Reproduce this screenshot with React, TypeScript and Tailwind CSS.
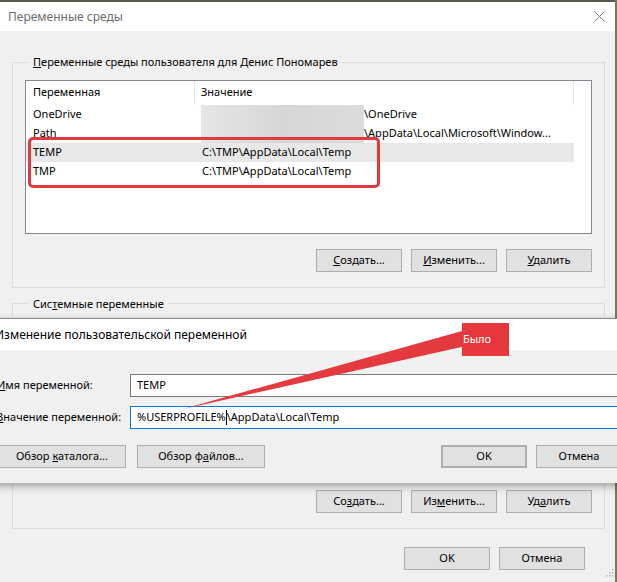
import type { ReactNode } from 'react';

const font = { fontFamily: '"Noto Sans", "Liberation Sans", sans-serif' };

const WinButton = ({ children, className = '' }: { children: ReactNode; className?: string }) => (
  <div
    className={`h-[23px] w-[86px] flex items-center justify-center bg-[#e1e1e1] border border-[#adadad] text-[11px] text-black ${className}`}
  >
    <span className="whitespace-pre">{children}</span>
  </div>
);

const userVars = [
  { name: 'OneDrive', value: '\\OneDrive', hidden: true },
  { name: 'Path', value: '\\AppData\\Local\\Microsoft\\Window...', hidden: true },
  { name: 'TEMP', value: 'C:\\TMP\\AppData\\Local\\Temp', selected: true },
  { name: 'TMP', value: 'C:\\TMP\\AppData\\Local\\Temp' },
];

const VarList = ({ rows }: { rows: typeof userVars }) => (
  <div className="h-[154px] bg-white border border-[#828790] overflow-hidden">
    {/* header */}
    <div className="flex h-[24px] w-[548px] text-[11px] text-black">
      <div className="w-[169px] pl-[7px] flex items-center border-r border-[#e5e5e5]">Переменная</div>
      <div className="flex-1 pl-[6px] flex items-center border-r border-[#e5e5e5]">Значение</div>
    </div>
    {rows.map((r) => (
      <div
        key={r.name}
        className={`flex h-[19px] w-[548px] items-center text-[11px] text-black ${r.selected ? 'bg-[#e8e8e8]' : ''}`}
      >
        <div className="w-[170px] pl-[7px]">{r.name}</div>
        <div className="flex-1 flex items-center h-full">
          {r.hidden && (
            <span className="h-full w-[163px] ml-[5px] bg-gradient-to-r from-[#e6e6e6] via-[#d6d6d6] to-[#dcdcdc]" />
          )}
          <span className={`whitespace-nowrap ${r.hidden ? '' : 'pl-[6px]'}`}>{r.value}</span>
        </div>
      </div>
    ))}
  </div>
);

export default function App() {
  return (
    <div className="relative w-[617px] h-[582px] overflow-hidden bg-[#6f7a5e]" style={font}>
      {/* main window */}
      <div className="w-[615px] h-[582px] bg-[#f0f0f0] border-t-2 border-[#55594c] flex flex-col">
        <div className="h-[29px] bg-white flex items-center justify-between pl-[8px] pr-[10px]">
          <span className="text-[12px] text-[#6d6d6d]">Переменные среды</span>
          <svg width="11" height="11" viewBox="0 0 11 11" className="text-[#7a7a7a]">
            <path d="M0.5 0.5 L10.5 10.5 M10.5 0.5 L0.5 10.5" stroke="currentColor" strokeWidth="1" />
          </svg>
        </div>

        <div className="pl-[12px] pr-[10px]">
          <fieldset className="mt-[23px] border border-[#dcdcdc] px-[12px] pb-[15px] pt-[9px]">
            <legend className="ml-[4px] px-[4px] text-[11px] text-black">
              <u>П</u>еременные среды пользователя для Денис Пономарев
            </legend>
            <VarList rows={userVars} />
            <div className="flex justify-end gap-[9px] mt-[15px]">
              <WinButton><u>С</u>оздать...</WinButton>
              <WinButton><u>И</u>зменить...</WinButton>
              <WinButton><u>У</u>далить</WinButton>
            </div>
          </fieldset>

          <fieldset className="mt-[8px] border border-[#dcdcdc] px-[12px] pb-[15px] pt-[9px]">
            <legend className="ml-[4px] px-[4px] text-[11px] text-black">
              Сис<u>т</u>емные переменные
            </legend>
            <div className="h-[154px] bg-white border border-[#828790]" />
            <div className="flex justify-end gap-[9px] mt-[15px]">
              <WinButton>Со<u>з</u>дать...</WinButton>
              <WinButton>Из<u>м</u>енить...</WinButton>
              <WinButton>Уд<u>а</u>лить</WinButton>
            </div>
          </fieldset>
        </div>

        <div className="flex justify-end gap-[9px] mt-[18px] pr-[30px]">
          <WinButton>OK</WinButton>
          <WinButton>Отмена</WinButton>
        </div>
      </div>

      {/* resize grip */}
      <svg className="absolute left-[605px] top-[568px]" width="9" height="10" viewBox="0 0 9 10">
        {[
          [7, 1], [7, 4], [4, 4], [7, 7], [4, 7], [1, 7],
        ].map(([x, y]) => (
          <rect key={`${x}-${y}`} x={x} y={y} width="1.5" height="1.5" fill="#b5b5b5" />
        ))}
      </svg>

      {/* red highlight on TEMP / TMP rows */}
      <div className="absolute left-[28px] top-[137px] w-[352px] h-[51px] border-[3px] border-[#e0393e] rounded-[5px]" />

      {/* edit dialog on top */}
      <div className="absolute left-[-17px] top-[318px] w-[651px] border-t border-[#8a8a8a] shadow-[0_3px_8px_rgba(0,0,0,0.35)]">
        <div className="h-[31px] bg-white flex items-center pl-[12px]">
          <span className="text-[12px] text-black whitespace-nowrap">Изменение пользовательской переменной</span>
        </div>
        <div className="bg-[#f0f0f0] pl-[14px] pr-[12px] pt-[24px] pb-[15px] text-[11px] text-black">
          <div className="flex items-center h-[23px]">
            <span className="w-[133px] whitespace-nowrap"><u>И</u>мя переменной:</span>
            <div className="flex-1 h-full bg-white border border-[#7a7a7a] flex items-center pl-[6px]">TEMP</div>
          </div>
          <div className="flex items-center h-[23px] mt-[9px]">
            <span className="w-[133px] whitespace-nowrap"><u>З</u>начение переменной:</span>
            <div className="flex-1 h-full bg-white border border-[#0078d7] flex items-center pl-[6px] whitespace-pre">
              %USERPROFILE%
              <span className="inline-block w-px h-[15px] bg-black" />
              \AppData\Local\Temp
            </div>
          </div>
          <div className="flex mt-[16px]">
            <WinButton className="w-[128px] ml-[1px]">Обзор <u>к</u>аталога...</WinButton>
            <WinButton className="w-[128px] ml-[11px]">Обзор ф<u>а</u>йлов...</WinButton>
            <WinButton className="ml-auto border-2 border-[#0078d7]">OK</WinButton>
            <WinButton className="ml-[9px]">Отмена</WinButton>
          </div>
        </div>
      </div>

      {/* annotation: arrow + label */}
      <svg className="absolute left-0 top-0 pointer-events-none" width="617" height="582">
        <polygon points="183,409 462,331 466,346" fill="#e43a3f" />
      </svg>
      <div className="absolute left-[462px] top-[323px] w-[47px] h-[33px] bg-[#e8383d] text-white text-[11px] pl-[1px] pt-[10px] leading-none">
        Было
      </div>
    </div>
  );
}
